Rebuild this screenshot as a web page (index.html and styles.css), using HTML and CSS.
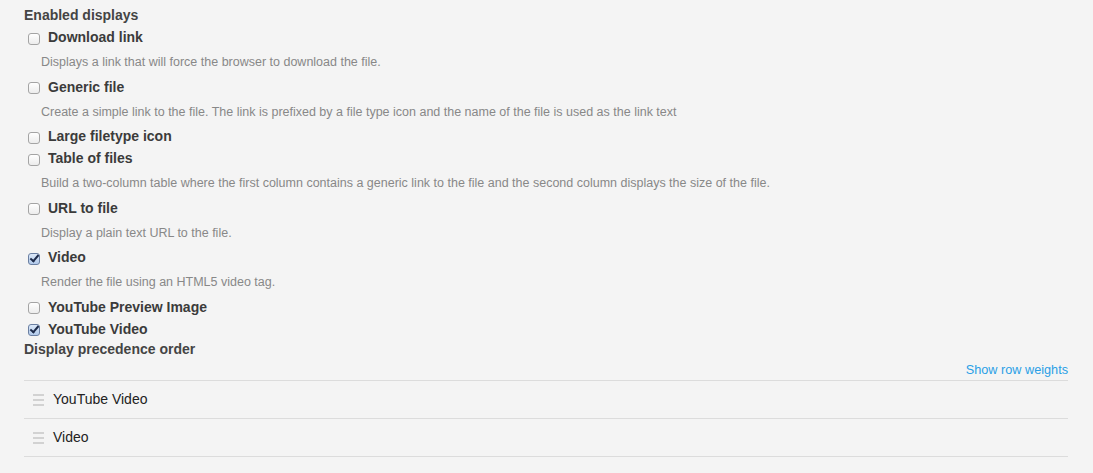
FILE: index.html
```html
<!DOCTYPE html>
<html>
<head>
<meta charset="utf-8">
<link rel="stylesheet" href="styles.css">
</head>
<body>
<div class="page">
  <div class="heading">Enabled displays</div>
  <div class="options">
    <div class="option">
      <label class="opt-label"><input type="checkbox" class="cb"><span>Download link</span></label>
      <div class="desc">Displays a link that will force the browser to download the file.</div>
    </div>
    <div class="option">
      <label class="opt-label"><input type="checkbox" class="cb"><span>Generic file</span></label>
      <div class="desc">Create a simple link to the file. The link is prefixed by a file type icon and the name of the file is used as the link text</div>
    </div>
    <div class="option">
      <label class="opt-label"><input type="checkbox" class="cb"><span>Large filetype icon</span></label>
    </div>
    <div class="option">
      <label class="opt-label"><input type="checkbox" class="cb"><span>Table of files</span></label>
      <div class="desc">Build a two-column table where the first column contains a generic link to the file and the second column displays the size of the file.</div>
    </div>
    <div class="option">
      <label class="opt-label"><input type="checkbox" class="cb"><span>URL to file</span></label>
      <div class="desc">Display a plain text URL to the file.</div>
    </div>
    <div class="option">
      <label class="opt-label"><input type="checkbox" class="cb" checked><span>Video</span></label>
      <div class="desc">Render the file using an HTML5 video tag.</div>
    </div>
    <div class="option">
      <label class="opt-label"><input type="checkbox" class="cb"><span>YouTube Preview Image</span></label>
    </div>
    <div class="option">
      <label class="opt-label"><input type="checkbox" class="cb" checked><span>YouTube Video</span></label>
    </div>
  </div>
  <div class="heading heading-order">Display precedence order</div>
  <div class="weights"><a class="weights-link" href="#">Show row weights</a></div>
  <div class="order-table">
    <div class="order-row"><span class="handle"><i></i><i></i><i></i></span><span class="row-name">YouTube Video</span></div>
    <div class="order-row"><span class="handle"><i></i><i></i><i></i></span><span class="row-name">Video</span></div>
  </div>
</div>
</body>
</html>
```

FILE: styles.css
```css
html, body {
  margin: 0;
  padding: 0;
  background: #f4f4f4;
}
body {
  font-family: "Liberation Sans", Arial, Helvetica, sans-serif;
  color: #333;
}
.page {
  padding: 5px 25px 0 24px;
}
.heading {
  font-size: 14px;
  font-weight: bold;
  color: #444;
  line-height: 21px;
}
.options {
  display: flex;
  flex-direction: column;
}
.option {
  display: flex;
  flex-direction: column;
}
.opt-label {
  display: flex;
  align-items: center;
  height: 22px;
  font-size: 14px;
  font-weight: bold;
  color: #3b3b3b;
}
.cb {
  appearance: none;
  -webkit-appearance: none;
  width: 12px;
  height: 12px;
  margin: 3px 8px 0 4px;
  border: 1px solid #a4a4a4;
  border-radius: 3px;
  background: linear-gradient(#ffffff, #ececec);
  box-sizing: border-box;
  position: relative;
  flex: none;
}
.cb:checked {
  border-color: #6a7fa2;
  background: linear-gradient(#dbe8f8, #b1c9ea);
}
.cb:checked::after {
  content: "";
  position: absolute;
  left: 3px;
  top: -1px;
  width: 3px;
  height: 7px;
  border-right: 2px solid #1d2b4a;
  border-bottom: 2px solid #1d2b4a;
  transform: rotate(40deg);
}
.desc {
  font-size: 12.5px;
  line-height: 16px;
  color: #888;
  margin: 6px 0 5.5px 17px;
}
.heading-order {
  margin-top: -1px;
}
.weights {
  display: flex;
  justify-content: flex-end;
  align-items: flex-start;
  padding-top: 2.5px;
  height: 18px;
  line-height: 16px;
}
.weights-link {
  font-size: 12.7px;
  color: #2a9fe6;
  text-decoration: none;
}
.order-table {
  border-top: 1px solid #dcdcdc;
}
.order-row {
  display: flex;
  align-items: center;
  height: 35px;
  padding-bottom: 2px;
  border-bottom: 1px solid #dcdcdc;
  font-size: 14px;
  color: #222;
}
.handle {
  display: flex;
  flex-direction: column;
  gap: 3px;
  width: 11px;
  margin: 2px 9px 0 9px;
}
.handle i {
  display: block;
  height: 2px;
  background: #d2d2d2;
}
.row-name {
  line-height: 16px;
}
```
